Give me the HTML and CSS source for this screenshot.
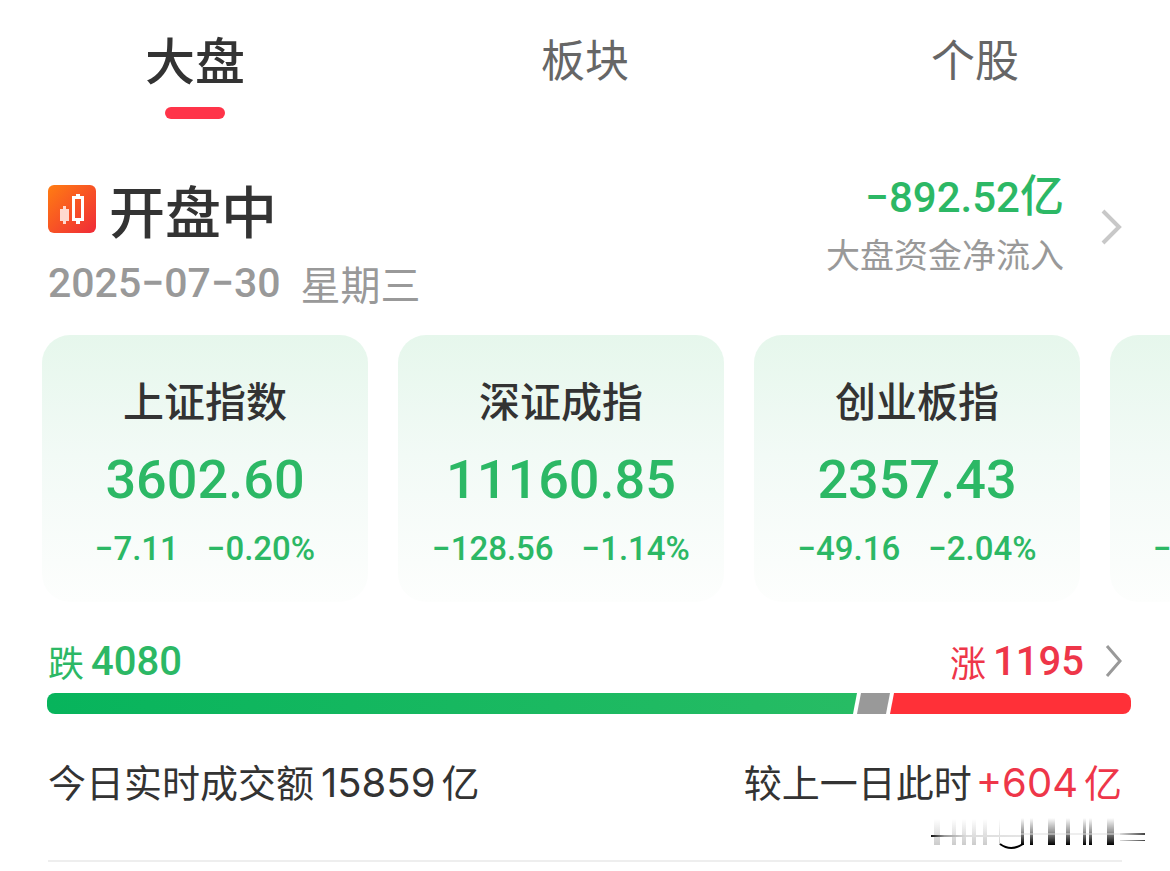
FILE: index.html
```html
<!DOCTYPE html>
<html lang="zh-CN">
<head>
<meta charset="utf-8">
<meta name="viewport" content="width=device-width, initial-scale=1">
<title>大盘</title>
<link rel="stylesheet" href="styles.css">
</head>
<body>
<nav class="tabs">
  <button class="tab tab-active" type="button">大盘</button>
  <button class="tab" type="button">板块</button>
  <button class="tab" type="button">个股</button>
</nav>
<main>
  <header class="status">
    <div class="session">
      <h1 class="session-title">
        <svg class="logo" viewBox="0 0 48 48" aria-hidden="true">
          <defs><linearGradient id="lg" x1="0" y1="0" x2="1" y2="1"><stop offset="0" stop-color="#ff7d12"/><stop offset="1" stop-color="#f02a38"/></linearGradient></defs>
          <rect width="48" height="48" rx="6" fill="url(#lg)"/>
          <path d="M12 24h3v-3h3v3h3v12h-3v3h-3v-3h-3z" fill="#ffd9cf"/>
          <path d="M30 9v4M30 35v4" stroke="#fff" stroke-width="4"/>
          <rect x="25.500" y="12.500" width="9" height="22" fill="none" stroke="#fff" stroke-width="3"/>
        </svg>
        <span>开盘中</span>
      </h1>
      <p class="date"><span>2025−07−30</span><span class="weekday">星期三</span></p>
    </div>
    <a class="flow" href="#flow">
      <span class="flow-text"><strong class="flow-value">−892.52<span class="unit">亿</span></strong><span class="flow-label">大盘资金净流入</span></span>
      <svg class="chevron-large" viewBox="0 0 22 38" aria-hidden="true"><path d="M3 3l16 16L3 35" fill="none" stroke="#c8c8c8" stroke-width="4"/></svg>
    </a>
  </header>

  <section class="indices">
    <article class="card"><h2 class="name">上证指数</h2><p class="price">3602.60</p><p class="change"><span>−7.11</span><span>−0.20%</span></p></article>
    <article class="card"><h2 class="name">深证成指</h2><p class="price">11160.85</p><p class="change"><span>−128.56</span><span>−1.14%</span></p></article>
    <article class="card"><h2 class="name">创业板指</h2><p class="price">2357.43</p><p class="change"><span>−49.16</span><span>−2.04%</span></p></article>
    <article class="card card-next"><p class="change"><span>−</span></p></article>
  </section>

  <section class="breadth">
    <div class="counts">
      <span class="count down"><span>跌</span><b>4080</b></span>
      <a class="count up" href="#breadth"><span>涨</span><b>1195</b>
        <svg class="chevron-small" viewBox="0 0 18 34" aria-hidden="true"><path d="M2 2l13 15L2 32" fill="none" stroke="#999" stroke-width="3"/></svg>
      </a>
    </div>
    <div class="bar"><span class="part part-down"></span><span class="part part-flat"></span><span class="part part-up"></span></div>
  </section>

  <footer class="turnover">
    <span>今日实时成交额<span class="figure">15859</span>亿</span>
    <span>较上一日此时<span class="rise"><span class="figure">+604</span>亿</span></span>
    <svg class="mark" viewBox="0 0 220 36" aria-hidden="true">
      <defs>
        <linearGradient id="fade" x1="0" y1="0" x2="0" y2="1"><stop offset="0" stop-color="#000" stop-opacity="0"/><stop offset=".5" stop-color="#000" stop-opacity=".4"/><stop offset="1" stop-color="#000"/></linearGradient>
        <linearGradient id="soft" x1="0" y1="0" x2="0" y2="1"><stop offset="0" stop-color="#999" stop-opacity="0"/><stop offset="1" stop-color="#999" stop-opacity=".5"/></linearGradient>
        <linearGradient id="line" x1="0" y1="0" x2="1" y2="0"><stop offset="0" stop-color="#111"/><stop offset=".15" stop-color="#999"/><stop offset=".4" stop-color="#ddd"/><stop offset="1" stop-color="#e4e4e4"/></linearGradient>
        <linearGradient id="tail" x1="0" y1="0" x2="1" y2="0"><stop offset="0" stop-color="#ddd"/><stop offset="1" stop-color="#444"/></linearGradient>
      </defs>
      <path d="M4 3h6v26H4zM22 3h4v26h-4zM32 3h4v26h-4zM42 3h4v26h-4zM53 3h4v26h-4zM69 3h1v26h-1z" fill="url(#soft)"/>
      <path d="M91 2h3v27h-3zM100 2h3v27h-3zM118 2h7v27h-7zM136 2h4v27h-4zM153 2h3v27h-3zM159 2h3v27h-3zM177 2h7v27h-7z" fill="url(#fade)"/>
      <path d="M1 19h90v2H1z" fill="url(#line)"/>
      <path d="M91 18h99" stroke="#ddd"/>
      <path d="M190 17h25v2h-25zM190 24h25v1h-25z" fill="url(#tail)"/>
      <path d="M70 28Q81 36 93 28" fill="none" stroke="#000" stroke-width="2"/>
    </svg>
  </footer>
</main>
</body>
</html>
```
FILE: styles.css
```css
* { box-sizing: border-box; }
body {
  margin: 0;
  background: #fff;
  color: #333;
  font-family: "Noto Sans CJK SC", sans-serif;
  overflow-x: hidden;
}
h1, h2, p { margin: 0; }
a { color: inherit; text-decoration: none; }
svg { display: block; flex: none; }

.tabs { display: grid; grid-template-columns: repeat(3, 1fr); height: 120px; }
.tab {
  display: flex;
  flex-direction: column;
  align-items: center;
  padding: 26px 0 0;
  border: 0;
  background: none;
  color: #666;
  font: 400 44px/64px "Noto Sans CJK SC", sans-serif;
}
.tab-active { color: #333; font-size: 50px; font-weight: 500; }
.tab-active::after {
  content: "";
  width: 60px;
  height: 12px;
  margin-top: 17px;
  border-radius: 6px;
  background: #ff3449;
}

.status {
  display: flex;
  justify-content: space-between;
  padding: 55px 48px 0;
  height: 215px;
}
.session-title {
  display: flex;
  align-items: center;
  gap: 13px;
  font-size: 56px;
  font-weight: 500;
  line-height: 68px;
}
.logo { width: 48px; height: 48px; }
.date {
  display: flex;
  gap: 20px;
  padding-top: 4px;
  color: #999;
  font-family: Roboto, "Noto Sans CJK SC", sans-serif;
  font-size: 41px;
  font-weight: 500;
  line-height: 72px;
}
.weekday { padding-top: 4px; font-size: 40px; font-weight: 400; }
.flow { display: flex; align-items: center; gap: 36px; height: 104px; }
.flow-text { display: flex; flex-direction: column; align-items: flex-end; }
.flow-value {
  color: #2cb865;
  font-family: Roboto, "Noto Sans CJK SC", sans-serif;
  font-size: 42px;
  font-weight: 500;
  line-height: 52px;
}
.unit { font-size: 44px; }
.flow-label { color: #999; font-size: 34px; line-height: 60px; }
.chevron-large { width: 22px; height: 38px; }

.indices {
  display: grid;
  grid-template-columns: repeat(4, 326px);
  gap: 30px;
  padding-left: 42px;
  width: 100%;
  overflow: hidden;
}
.card {
  display: flex;
  flex-direction: column;
  align-items: center;
  height: 267px;
  padding-top: 33px;
  border-radius: 28px;
  background: linear-gradient(#e6f7ec, #f2faf6 45%, #fdfefd);
  color: #2cb865;
}
.card-next { align-items: flex-start; padding: 189px 0 0 43px; }
.name { color: #333; font-size: 41px; font-weight: 500; line-height: 62px; }
.price {
  padding-top: 6px;
  font-family: Roboto, sans-serif;
  font-size: 54px;
  font-weight: 500;
  line-height: 88px;
}
.change {
  display: flex;
  gap: 28px;
  font-family: Roboto, sans-serif;
  font-size: 33px;
  font-weight: 500;
  line-height: 50px;
}

.breadth { padding: 27px 39px 0 47px; }
.counts { display: flex; justify-content: space-between; padding: 0 8px 0 1px; }
.count { display: flex; align-items: center; gap: 7px; font-size: 36px; line-height: 60px; }
.count b { padding-top: 3px; font-family: Roboto, sans-serif; font-size: 40px; font-weight: 500; }
.down { color: #2cb865; }
.up { color: #ee3649; }
.chevron-small { width: 18px; height: 34px; margin-left: 14px; }
.bar { display: flex; height: 21px; margin-top: 1px; border-radius: 8px; overflow: hidden; }
.part-down { flex: 810; background: linear-gradient(90deg, #07b45c, #27bc64); clip-path: polygon(0 0, 100% 0, calc(100% - 4px) 100%, 0 100%); }
.part-flat { flex: 33; background: #999; clip-path: polygon(4px 0, 100% 0, calc(100% - 4px) 100%, 0 100%); }
.part-up { flex: 241; background: #ff3038; clip-path: polygon(4px 0, 100% 0, 100% 100%, 0 100%); }

.turnover {
  position: relative;
  display: flex;
  justify-content: space-between;
  height: 148px;
  margin: 0 48px;
  padding-top: 37px;
  border-bottom: 2px solid #eee;
  font-size: 38px;
  line-height: 60px;
}
.figure { padding: 0 6px 0 7px; font-family: Inter, sans-serif; font-size: 40px; }
.rise .figure { padding-left: 4px; }
.rise { color: #ee3649; }
.mark { position: absolute; right: -28px; bottom: 8px; width: 220px; height: 36px; }
```
